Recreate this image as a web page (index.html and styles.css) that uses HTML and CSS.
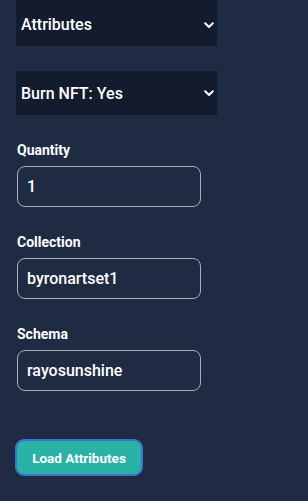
FILE: index.html
```html
<!DOCTYPE html>
<html>
<head>
<meta charset="utf-8">
<link rel="stylesheet" href="styles.css">
</head>
<body>
<div class="panel">
  <div class="select first">
    <span>Attributes</span>
    <svg class="chev" width="10" height="7" viewBox="0 0 10 7"><path d="M1.2 1.2 L5 5 L8.8 1.2" fill="none" stroke="#fff" stroke-width="2" stroke-linecap="round" stroke-linejoin="round"/></svg>
  </div>
  <div class="select second">
    <span>Burn NFT: Yes</span>
    <svg class="chev" width="10" height="7" viewBox="0 0 10 7"><path d="M1.2 1.2 L5 5 L8.8 1.2" fill="none" stroke="#fff" stroke-width="2" stroke-linecap="round" stroke-linejoin="round"/></svg>
  </div>
  <div class="field">
    <label class="label">Quantity</label>
    <div class="input">1</div>
  </div>
  <div class="field">
    <label class="label">Collection</label>
    <div class="input">byronartset1</div>
  </div>
  <div class="field">
    <label class="label">Schema</label>
    <div class="input">rayosunshine</div>
  </div>
  <button class="btn">Load Attributes</button>
</div>
</body>
</html>
```
FILE: styles.css
```css
html, body {
  margin: 0;
  padding: 0;
  background: #1e2b43;
  font-family: Roboto, "Liberation Sans", sans-serif;
  color: #fff;
}
.panel {
  display: flex;
  flex-direction: column;
  align-items: flex-start;
  padding: 0 0 0 16px;
  width: 308px;
  height: 501px;
  box-sizing: border-box;
}
.select {
  width: 201px;
  height: 44px;
  background: #131b2f;
  display: flex;
  align-items: center;
  justify-content: space-between;
  padding: 0 3px 0 5px;
  box-sizing: border-box;
  font-size: 16px;
  font-weight: 500;
}
.select.first {
  height: 46px;
  padding-top: 3px;
}
.select.second {
  margin-top: 25px;
}
.chev {
  display: block;
  margin-top: 1px;
}
.field {
  display: flex;
  flex-direction: column;
  margin-top: 27px;
  margin-left: 1px;
}
.label {
  font-size: 14px;
  font-weight: 700;
  line-height: 16px;
  margin-bottom: 8px;
}
.input {
  width: 184px;
  height: 41px;
  box-sizing: border-box;
  border: 1px solid #a7afbd;
  border-radius: 8px;
  padding: 0 9px;
  display: flex;
  align-items: center;
  font-size: 16px;
  font-weight: 500;
}
.btn {
  margin-top: 48px;
  margin-left: -1px;
  width: 128px;
  height: 37px;
  box-sizing: border-box;
  background: #2ab2a6;
  border: 2px solid #3d73cf;
  border-radius: 9px;
  color: #fff;
  font-family: Roboto, "Liberation Sans", sans-serif;
  font-size: 13.5px;
  font-weight: 700;
  padding: 0;
}
```
